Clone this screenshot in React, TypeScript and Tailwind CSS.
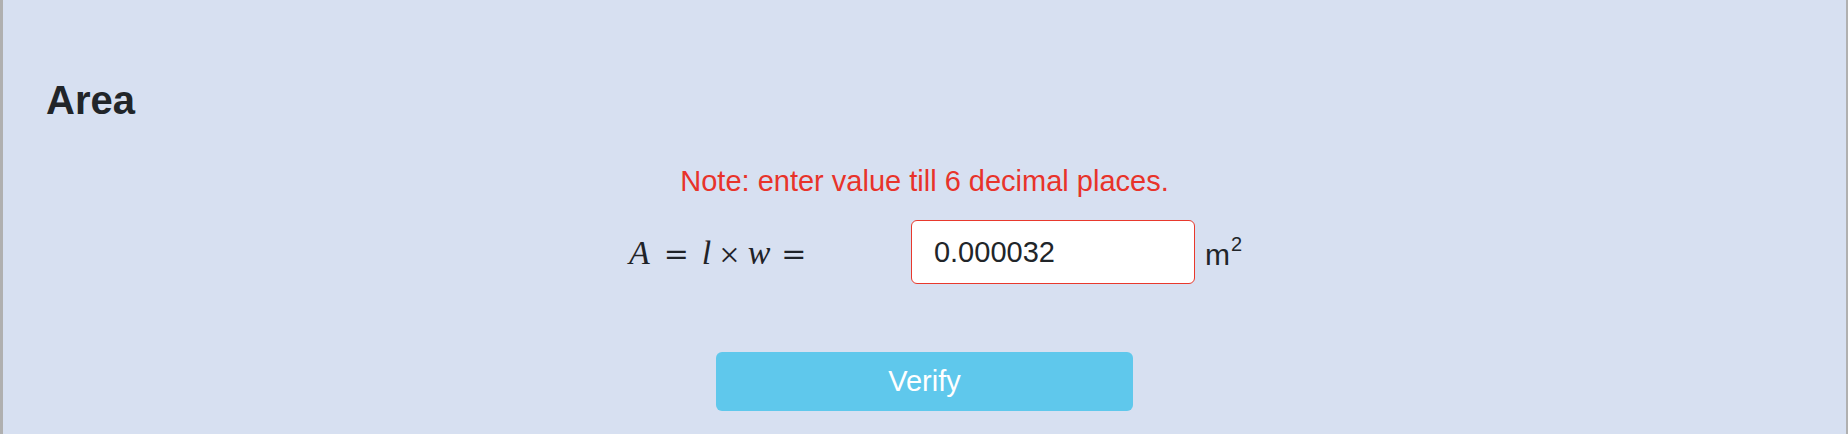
import { useState, type ChangeEvent } from "react";

const sans = "font-['Liberation_Sans',Arial,sans-serif]";
const serif = "font-['Liberation_Serif','Times_New_Roman',serif]";

export default function App() {
    const [value, setValue] = useState("0.000032");

    const handleChange = (e: ChangeEvent<HTMLInputElement>) => {
        setValue(e.target.value);
    };

    return (
        <div
            className={`${sans} h-[434px] w-full overflow-hidden border-l-[3px] border-r-[2px] border-[#b0b0b0] bg-[#d7e0f1] text-[#212529]`}
        >
            <div className="pt-[76px] pl-[43px]">
                <h3 className="text-[40px] leading-[48px] font-bold">Area</h3>
            </div>

            <div className="mt-[39px] flex flex-col items-center">
                <p className="text-[29px] leading-[36px] text-[#e8332a]">
                    Note: enter value till 6 decimal places.
                </p>

                {/* formula row */}
                <div className="mt-[21px] flex items-center pl-[22px]">
                    <div className={`${serif} w-[282px] flex items-baseline text-[34px] leading-none text-[#1f2328]`}>
                        <span className="italic">A</span>
                        <span className="ml-[14px] font-['DejaVu_Serif',serif] text-[30px]">=</span>
                        <span className="ml-[13px] italic">l</span>
                        <span className="ml-[8px] text-[36px] translate-y-[3px]">×</span>
                        <span className="ml-[8px] italic">w</span>
                        <span className="ml-[11px] font-['DejaVu_Serif',serif] text-[30px]">=</span>
                    </div>
                    <input
                        type="text"
                        value={value}
                        onChange={handleChange}
                        className="h-[64px] w-[284px] rounded-[6px] border-[1.5px] border-[#e8392d] bg-white px-[22px] text-[29px] text-[#212529] outline-none"
                    />
                    <span className="ml-[10px] text-[30px] leading-none">
                        m<span className="ml-[1px] text-[20px] leading-none align-[14px]">2</span>
                    </span>
                </div>

                <button
                    type="button"
                    className="mt-[68px] h-[59px] w-[417px] rounded-[6px] bg-[#5fc8ec] text-[29px] text-white"
                >
                    Verify
                </button>
            </div>
        </div>
    );
}
